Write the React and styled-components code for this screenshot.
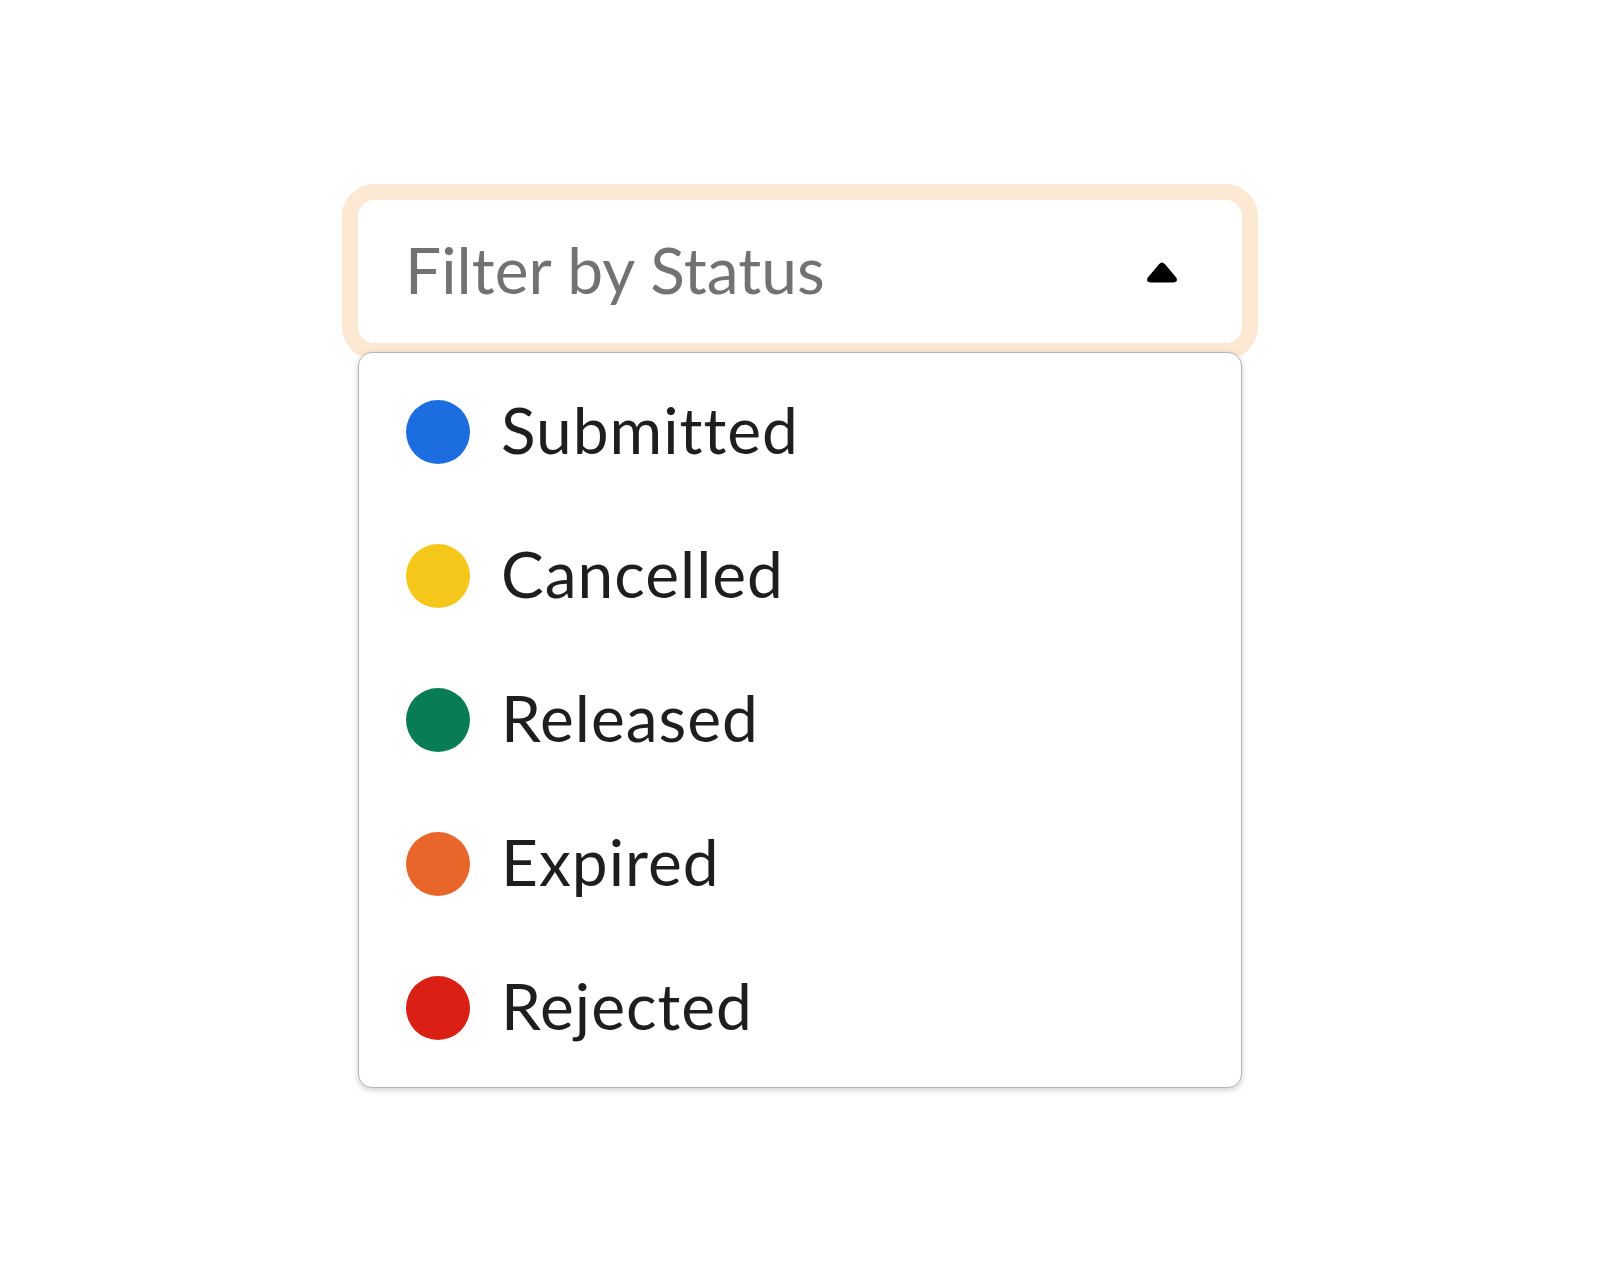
import styled, { createGlobalStyle } from 'styled-components';

const GlobalStyle = createGlobalStyle`
    body {
        margin: 0;
        background: #ffffff;
        font-family: Lato, 'Noto Sans', sans-serif;
    }
`;

const statuses = [
    { label: 'Submitted', color: '#1b6de0' },
    { label: 'Cancelled', color: '#f5c71a' },
    { label: 'Released', color: '#087c55' },
    { label: 'Expired', color: '#e8662a' },
    { label: 'Rejected', color: '#da2015' },
];

const App = () => {
    return (
        <>
            <GlobalStyle />
            <Page>
                <FilterWrapper>
                    <SelectBox>
                        <Placeholder>Filter by Status</Placeholder>
                        <Caret width="32" height="22" viewBox="0 0 32 22">
                            <path d="M13 3.2 Q16 0 19 3.2 L30.2 16.6 Q32.6 21.5 27 21.5 L5 21.5 Q-0.6 21.5 1.8 16.6 Z" />
                        </Caret>
                    </SelectBox>
                    <Menu>
                        {statuses.map((s) => (
                            <MenuItem key={s.label}>
                                <Dot $color={s.color} />
                                <ItemLabel>{s.label}</ItemLabel>
                            </MenuItem>
                        ))}
                    </Menu>
                </FilterWrapper>
            </Page>
        </>
    );
};

export default App;

const Page = styled.div`
    min-height: 1288px;
    padding-top: 200px;
    box-sizing: border-box;
`;

const FilterWrapper = styled.div`
    position: relative;
    width: 884px;
    margin: 0 auto;
`;

const SelectBox = styled.div`
    height: 143px;
    box-sizing: border-box;
    display: flex;
    align-items: center;
    justify-content: space-between;
    padding: 0 64px 0 47px;
    background: #ffffff;
    border-radius: 16px;
    box-shadow: 0 0 0 16px #fde9d3;
`;

const Placeholder = styled.span`
    font-size: 64px;
    font-weight: 400;
    color: #727272;
    padding-bottom: 4px;
    letter-spacing: 0.1px;
`;

const Caret = styled.svg`
    display: block;
    fill: #000000;
`;

const Menu = styled.ul`
    position: absolute;
    top: 152px;
    left: 0;
    right: 0;
    z-index: 2;
    margin: 0;
    padding: 7px 0;
    list-style: none;
    background: #ffffff;
    border: 1px solid #b5b5b5;
    border-radius: 14px;
    box-shadow: 0 2px 6px rgba(0, 0, 0, 0.2);
`;

const MenuItem = styled.li`
    height: 144px;
    display: flex;
    align-items: center;
    gap: 31px;
    padding: 0 47px;
`;

const Dot = styled.span`
    width: 64px;
    height: 64px;
    flex-shrink: 0;
    border-radius: 50%;
    background: ${(p) => p.$color};
`;

const ItemLabel = styled.span`
    font-size: 64px;
    font-weight: 400;
    color: #1e1e1e;
    letter-spacing: 1px;
    padding-bottom: 6px;
`;
